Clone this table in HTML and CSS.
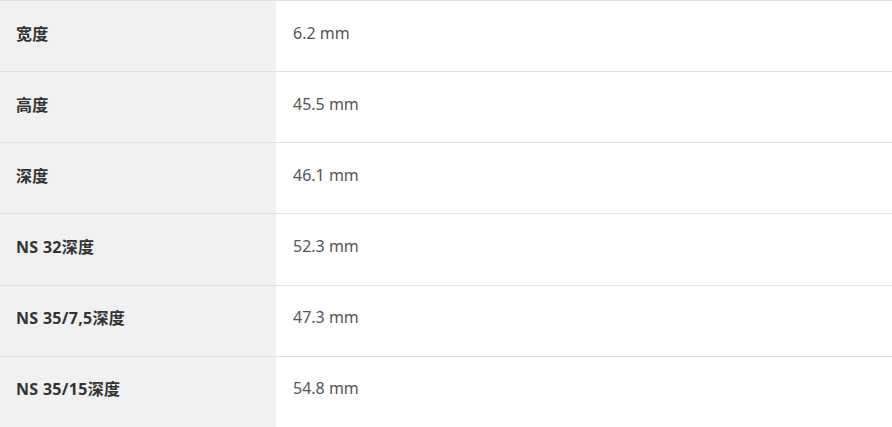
FILE: index.html
```html
<!DOCTYPE html>
<html lang="zh">
<head>
<meta charset="utf-8">
<link rel="stylesheet" href="styles.css">
</head>
<body>
<div class="specs">
  <div class="row"><div class="label">宽度</div><div class="value">6.2 mm</div></div>
  <div class="row"><div class="label">高度</div><div class="value">45.5 mm</div></div>
  <div class="row"><div class="label">深度</div><div class="value">46.1 mm</div></div>
  <div class="row"><div class="label">NS 32深度</div><div class="value">52.3 mm</div></div>
  <div class="row"><div class="label">NS 35/7,5深度</div><div class="value">47.3 mm</div></div>
  <div class="row"><div class="label">NS 35/15深度</div><div class="value">54.8 mm</div></div>
</div>
</body>
</html>
```
FILE: styles.css
```css
html, body {
  margin: 0;
  padding: 0;
  background: #ffffff;
}
.specs {
  width: 892px;
  font-family: "Noto Sans", "Noto Sans CJK SC", sans-serif;
  font-size: 16px;
}
.row {
  display: grid;
  grid-template-columns: 276px 1fr;
  height: 71.17px;
  box-sizing: border-box;
  border-top: 1px solid #e0e0e4;
}
.label {
  background: #f1f1f1;
  color: #333333;
  font-weight: 700;
  padding-left: 16px;
  letter-spacing: 0.3px;
  display: flex;
  align-items: center;
  padding-bottom: 7px;
}
.value {
  color: #555555;
  padding-left: 17px;
  display: flex;
  align-items: center;
  padding-bottom: 7px;
}
```
